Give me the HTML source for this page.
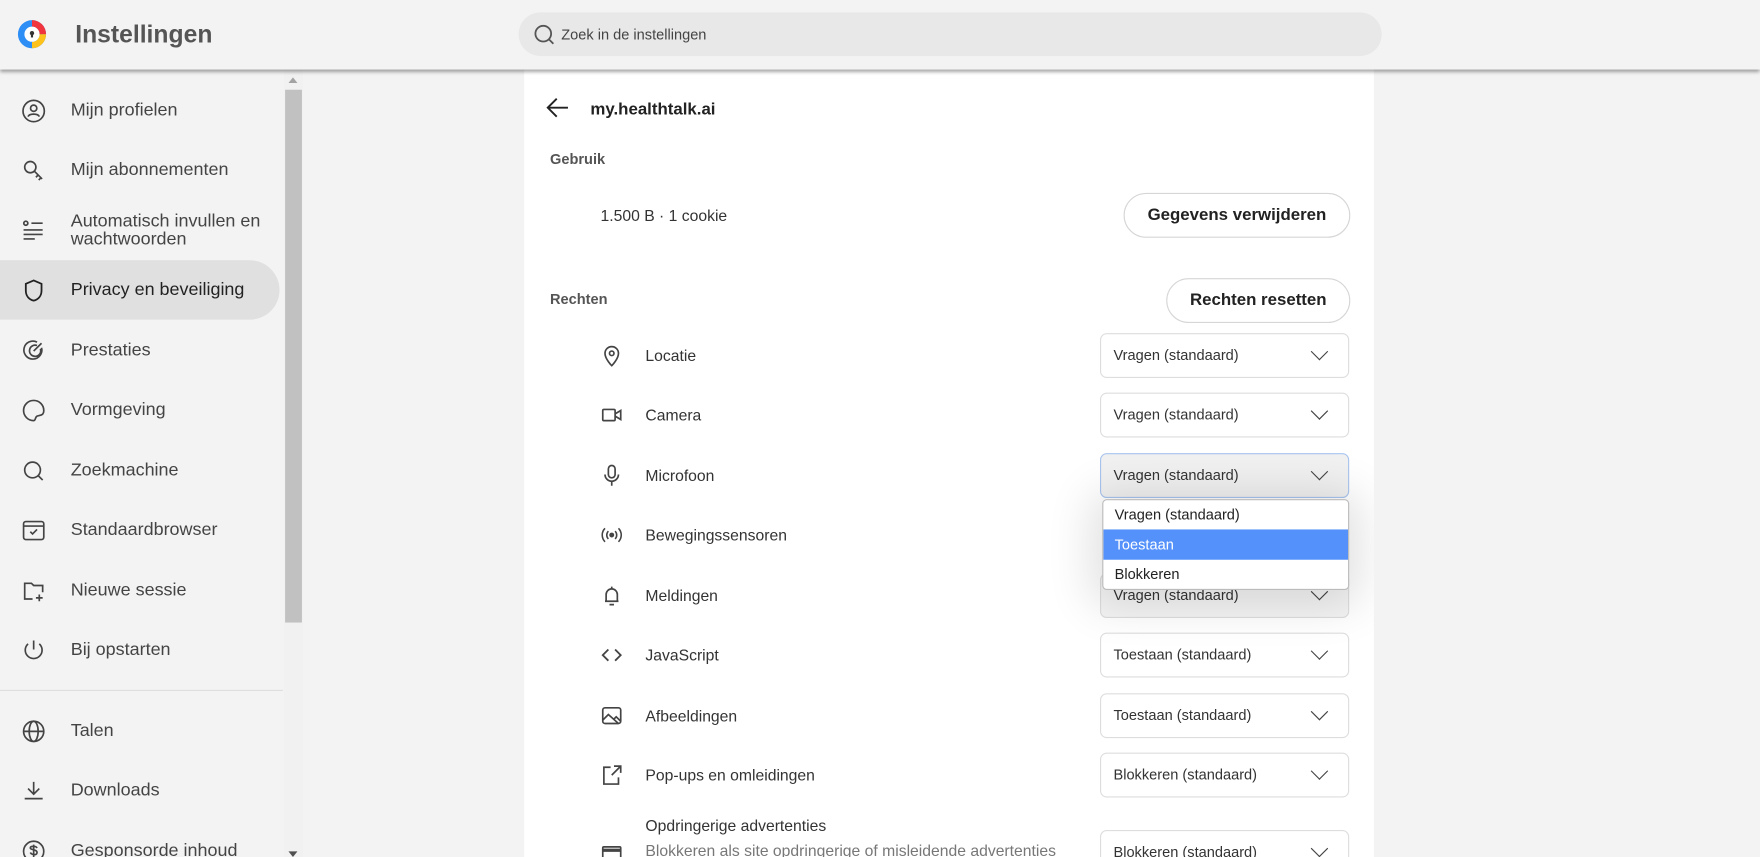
<!DOCTYPE html>
<html><head><meta charset="utf-8"><style>
html,body{margin:0;padding:0;width:1760px;height:857px;overflow:hidden;background:#f3f3f3}
#w{position:absolute;left:0;top:0;width:1568px;height:764px;overflow:hidden;transform:scale(1.12245,1.1217);transform-origin:0 0;font-family:"Liberation Sans",sans-serif;color:#333}
.a{position:absolute}
.hdr{left:0;top:0;width:1568px;height:62px;background:#f3f3f3;box-shadow:0 2px 3px rgba(0,0,0,.35);z-index:3}
.side{left:0;top:62px;width:252px;height:702px;background:#f3f3f3}
.it{position:absolute;left:0;width:249px;height:53px;}
.it svg{position:absolute;left:19px;top:50%;margin-top:-11px}
.it span{position:absolute;left:63px;top:50%;transform:translateY(-50%);font-size:16px;color:#444;line-height:16px}
.card{left:467px;top:62px;width:757px;height:702px;background:#fff;overflow:hidden}
.btn{position:absolute;border:1px solid #d6d6d6;border-radius:20px;background:#fff;font-size:15px;font-weight:bold;color:#222;text-align:center;line-height:38px;height:38px}
.row{position:absolute;left:0;width:757px;height:40px}
.row svg{position:absolute;left:68px;top:10px}
.row .l{position:absolute;left:108px;top:12px;font-size:14px;color:#333}
.dd{position:absolute;left:513px;top:0;width:220px;height:38px;border:1px solid #ddd;border-radius:6px;background:#fff;font-size:13px;line-height:38px;color:#333}
.dd b{font-weight:normal;position:absolute;left:11px}
.dd i{position:absolute;right:20px;width:10px;height:10px;border-right:1.7px solid #444;border-bottom:1.7px solid #444;transform:rotate(45deg);top:10px}
</style></head><body><div id="w">
<div class="a hdr">
 <svg class="a" style="left:15px;top:17px" width="27" height="27" viewBox="0 0 28 28"><circle cx="14" cy="14" r="13" fill="#2d8ef5"/><path d="M14 1a13 13 0 0 1 13 13h-6a7 7 0 0 0-7-7z" fill="#f0353f"/><path d="M27 14a13 13 0 0 1-13 13v-6a7 7 0 0 0 7-7z" fill="#ffc21a"/><circle cx="14" cy="14" r="7" fill="#fff"/><circle cx="14" cy="13" r="2" fill="#333"/><rect x="13" y="13" width="2" height="4" fill="#333"/></svg>
 <div class="a" style="left:67px;top:18px;font-size:22px;font-weight:bold;color:#555">Instellingen</div>
 <div class="a" style="left:462px;top:11px;width:769px;height:39px;border-radius:20px;background:#e8e8e8"></div>
 <svg class="a" style="left:474px;top:20px" width="22" height="22" viewBox="0 0 22 22" fill="none" stroke="#555" stroke-width="1.6"><circle cx="10" cy="10" r="7"/><path d="M15 15l4 4"/></svg>
 <div class="a" style="left:500px;top:23px;font-size:13px;color:#444">Zoek in de instellingen</div>
</div>
<div class="a side">
 <div class="it" style="top:10px"><svg width="22" height="22" viewBox="0 0 22 22" fill="none" stroke="#444" stroke-width="1.5"><circle cx="11" cy="11" r="9.5"/><circle cx="11" cy="8.5" r="2.8"/><path d="M6 16c1-3 9-3 10 0"/></svg><span>Mijn profielen</span></div>
 <div class="it" style="top:63px"><svg width="22" height="22" viewBox="0 0 22 22" fill="none" stroke="#444" stroke-width="1.5"><circle cx="8" cy="8" r="5"/><path d="M11.5 11.5l7 7M15 15l-2 2M17.5 17.5l-2 2"/></svg><span>Mijn abonnementen</span></div>
 <div class="it" style="top:117px"><svg width="22" height="22" viewBox="0 0 22 22" fill="none" stroke="#444" stroke-width="1.5"><circle cx="4" cy="4" r="1.8"/><path d="M9 4h10M2 10h17M2 14h17M2 18h10"/></svg><span>Automatisch invullen en<br>wachtwoorden</span></div>
 <div class="it" style="top:170px;background:#e0e0e0;border-radius:0 27px 27px 0"><svg width="22" height="22" viewBox="0 0 22 22" fill="none" stroke="#222" stroke-width="1.6"><path d="M11 2l7 3v6c0 5-3 8-7 9-4-1-7-4-7-9V5z"/></svg><span style="color:#222">Privacy en beveiliging</span></div>
 <div class="it" style="top:224px"><svg width="22" height="22" viewBox="0 0 22 22" fill="none" stroke="#444" stroke-width="1.5"><path d="M18 8a8 8 0 1 1-4-5M14 6a5 5 0 1 0 3 3M11 11l7-7"/></svg><span>Prestaties</span></div>
 <div class="it" style="top:277px"><svg width="22" height="22" viewBox="0 0 22 22" fill="none" stroke="#444" stroke-width="1.5"><path d="M11 2a9 9 0 1 0 0 18c2 0 1-3 3-4s6 0 6-5a9 9 0 0 0-9-9z"/></svg><span>Vormgeving</span></div>
 <div class="it" style="top:331px"><svg width="22" height="22" viewBox="0 0 22 22" fill="none" stroke="#444" stroke-width="1.5"><circle cx="10" cy="10" r="7"/><path d="M15 15l4 4"/></svg><span>Zoekmachine</span></div>
 <div class="it" style="top:384px"><svg width="22" height="22" viewBox="0 0 22 22" fill="none" stroke="#444" stroke-width="1.5"><rect x="2" y="3" width="18" height="16" rx="2"/><path d="M2 7h18M8 12l2 2 4-4"/></svg><span>Standaardbrowser</span></div>
 <div class="it" style="top:438px"><svg width="22" height="22" viewBox="0 0 22 22" fill="none" stroke="#444" stroke-width="1.5"><path d="M10 18H3V4h6l2 2h8v6M16 14v6M13 17h6"/></svg><span>Nieuwe sessie</span></div>
 <div class="it" style="top:491px"><svg width="22" height="22" viewBox="0 0 22 22" fill="none" stroke="#444" stroke-width="1.5"><path d="M11 2v8M6 5a7.5 7.5 0 1 0 10 0"/></svg><span>Bij opstarten</span></div>
 <div class="a" style="left:0;top:553px;width:252px;height:1px;background:#ddd"></div>
 <div class="it" style="top:563px"><svg width="22" height="22" viewBox="0 0 22 22" fill="none" stroke="#444" stroke-width="1.5"><circle cx="11" cy="11" r="9"/><ellipse cx="11" cy="11" rx="4" ry="9"/><path d="M2 11h18"/></svg><span>Talen</span></div>
 <div class="it" style="top:616px"><svg width="22" height="22" viewBox="0 0 22 22" fill="none" stroke="#444" stroke-width="1.5"><path d="M11 3v11M6 9l5 5 5-5M3 18h16"/></svg><span>Downloads</span></div>
 <div class="it" style="top:670px"><svg width="22" height="22" viewBox="0 0 22 22" fill="none" stroke="#444" stroke-width="1.5"><circle cx="11" cy="11" r="9"/><path d="M14 8c-1-2-6-2-6 0s6 1 6 4-5 2-6 0M11 5v12"/></svg><span>Gesponsorde inhoud</span></div>
</div>
<div class="a" style="left:253px;top:62px;width:17px;height:702px;background:#f1f1f1"></div>
<div class="a" style="left:254px;top:80px;width:15px;height:475px;background:#c1c1c1"></div>
<div class="a" style="left:257px;top:69px;width:0;height:0;border-left:4px solid transparent;border-right:4px solid transparent;border-bottom:5px solid #a3a3a3"></div>
<div class="a" style="left:257px;top:759px;width:0;height:0;border-left:4px solid transparent;border-right:4px solid transparent;border-top:5px solid #505050"></div>

<div class="a card">
 <svg class="a" style="left:19px;top:24px" width="22" height="20" viewBox="0 0 22 20" fill="none" stroke="#222" stroke-width="1.7"><path d="M20 10H3M10 2l-8 8 8 8"/></svg>
 <div class="a" style="left:59px;top:27px;font-size:15px;font-weight:bold;color:#222">my.healthtalk.ai</div>
 <div class="a" style="left:23px;top:72px;font-size:13px;font-weight:bold;color:#555">Gebruik</div>
 <div class="a" style="left:68px;top:122px;font-size:14px;color:#333">1.500 B · 1 cookie</div>
 <div class="btn" style="left:534px;top:110px;width:200px">Gegevens verwijderen</div>
 <div class="a" style="left:23px;top:197px;font-size:13px;font-weight:bold;color:#555">Rechten</div>
 <div class="btn" style="left:572px;top:186px;width:162px">Rechten resetten</div>

 <div class="row" style="top:235px"><svg width="20" height="20" viewBox="0 0 20 20" fill="none" stroke="#444" stroke-width="1.5"><path d="M10 19s-6-6-6-11a6 6 0 0 1 12 0c0 5-6 11-6 11z"/><circle cx="10" cy="8" r="2"/></svg><div class="l">Locatie</div><div class="dd"><b>Vragen (standaard)</b><i></i></div></div>
 <div class="row" style="top:288px"><svg width="20" height="20" viewBox="0 0 20 20" fill="none" stroke="#444" stroke-width="1.5"><rect x="2" y="5" width="11" height="10" rx="1"/><path d="M13 9l5-3v8l-5-3"/></svg><div class="l">Camera</div><div class="dd"><b>Vragen (standaard)</b><i></i></div></div>
 <div class="row" style="top:342px"><svg width="20" height="20" viewBox="0 0 20 20" fill="none" stroke="#444" stroke-width="1.5"><rect x="7" y="1" width="6" height="11" rx="3"/><path d="M4 9a6 6 0 0 0 12 0M10 15v4"/></svg><div class="l">Microfoon</div><div class="dd" style="background:#f1f1f1;border-color:#a8c4ee"><b>Vragen (standaard)</b><i></i></div></div>
 <div class="row" style="top:395px"><svg width="20" height="20" viewBox="0 0 20 20" fill="none" stroke="#444" stroke-width="1.4"><circle cx="10" cy="10" r="1.5" fill="#444"/><path d="M7 6.5a5 5 0 0 0 0 7M13 6.5a5 5 0 0 1 0 7M4 4a8.5 8.5 0 0 0 0 12M16 4a8.5 8.5 0 0 1 0 12"/></svg><div class="l">Bewegingssensoren</div></div>
 <div class="row" style="top:449px"><svg width="20" height="20" viewBox="0 0 20 20" fill="none" stroke="#444" stroke-width="1.5"><path d="M5 15V9a5 5 0 0 1 10 0v6H4M16 15h-1M8 18h4M10 2v2"/></svg><div class="l">Meldingen</div><div class="dd" style="background:#f4f4f4"><b>Vragen (standaard)</b><i></i></div></div>
 <div class="row" style="top:502px"><svg width="20" height="20" viewBox="0 0 20 20" fill="none" stroke="#444" stroke-width="1.6"><path d="M7 5l-5 5 5 5M13 5l5 5-5 5"/></svg><div class="l">JavaScript</div><div class="dd"><b>Toestaan (standaard)</b><i></i></div></div>
 <div class="row" style="top:556px"><svg width="20" height="20" viewBox="0 0 20 20" fill="none" stroke="#444" stroke-width="1.5"><rect x="2" y="3" width="16" height="14" rx="2"/><path d="M2 14l5-5 9 8M12 13l2-2 4 4"/></svg><div class="l">Afbeeldingen</div><div class="dd"><b>Toestaan (standaard)</b><i></i></div></div>
 <div class="row" style="top:609px"><svg width="20" height="20" viewBox="0 0 20 20" fill="none" stroke="#444" stroke-width="1.5"><path d="M9 3H3v15h13v-6M12 2h6v6M18 2l-8 8"/></svg><div class="l">Pop-ups en omleidingen</div><div class="dd"><b>Blokkeren (standaard)</b><i></i></div></div>
 <div class="row" style="top:673px"><svg width="20" height="20" viewBox="0 0 20 20" fill="none" stroke="#444" stroke-width="1.5" style="top:17px"><rect x="2" y="3" width="16" height="14" rx="1"/><path d="M2 6h16" stroke-width="3"/></svg><div class="l" style="top:-7px">Opdringerige advertenties</div><div class="l" style="top:15px;color:#777">Blokkeren als site opdringerige of misleidende advertenties</div><div class="dd" style="top:5px"><b>Blokkeren (standaard)</b><i></i></div></div>

 <div class="a" style="left:515px;top:383px;width:218px;height:79px;background:#fff;border:1px solid #bbb;border-radius:4px;box-shadow:0 4px 40px 10px rgba(0,0,0,.12);font-size:13px;overflow:hidden">
  <div style="height:26px;line-height:26px;padding-left:10px;color:#222">Vragen (standaard)</div>
  <div style="height:27px;line-height:27px;padding-left:10px;color:#fff;background:#5591fa">Toestaan</div>
  <div style="height:26px;line-height:26px;padding-left:10px;color:#222">Blokkeren</div>
 </div>
</div>
</div></body></html>
